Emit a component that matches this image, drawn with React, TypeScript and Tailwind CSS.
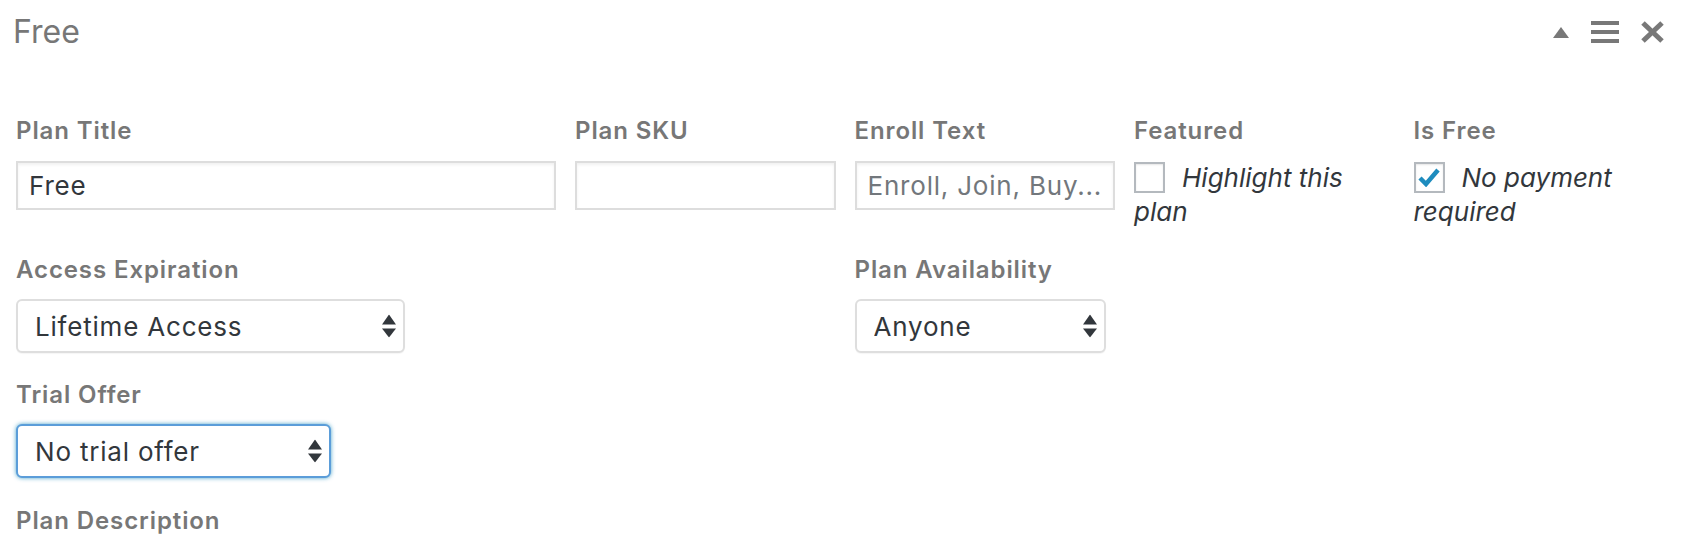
import clsx from 'clsx';

const labelCls = "block text-[24px] font-semibold leading-[32px] tracking-[0.9px] text-[#777]";
const inputCls =
  "mt-[14px] block h-[49px] w-full border-2 border-[#dddddd] bg-white px-[11px] text-[26px] tracking-[0.8px] text-[#32373c] shadow-[inset_0_2px_3px_rgba(0,0,0,0.06)] outline-none placeholder:text-[#72777c]";

function Arrows() {
  return (
    <svg width="14" height="23" viewBox="0 0 14 23" className="pointer-events-none absolute right-[7px] top-1/2 -translate-y-1/2" fill="#32373c">
      <polygon points="0,10 7,0 14,10" />
      <polygon points="0,14 14,14 7,23" />
    </svg>
  );
}

function SelectBox({ value, width, focused }: { value: string; width: string; focused?: boolean }) {
  return (
    <div
      className={clsx(
        'relative mt-[13px] h-[54px] rounded-[6px] border-2 bg-white',
        focused
          ? 'border-[#5b9dd9] shadow-[0_0_4px_rgba(30,140,190,0.8)]'
          : 'border-[#dedede] shadow-[0_1px_1px_rgba(0,0,0,0.04)]',
        width
      )}
    >
      <select
        defaultValue={value}
        className="h-full w-full appearance-none bg-transparent pl-[17px] pr-10 text-[26px] tracking-[0.8px] text-[#32373c] outline-none"
      >
        <option>{value}</option>
      </select>
      <Arrows />
    </div>
  );
}

function CheckField({ label, text, checked }: { label: string; text: string; checked?: boolean }) {
  return (
    <div>
      <span className={labelCls}>{label}</span>
      <div className="mt-[14px] text-[26px] italic leading-[34px] text-[#32373c]">
        <span className="float-left mr-[17px] mt-[1px] flex size-[31px] items-center justify-center border-2 border-[#b4b9be] bg-white shadow-[inset_0_1px_2px_rgba(0,0,0,0.1)]">
          {checked && (
            <svg width="22" height="19" viewBox="0 0 22 19">
              <polyline points="2,10 8,16 20,2" fill="none" stroke="#1e8cbe" strokeWidth="4.5" />
            </svg>
          )}
        </span>
        {text}
      </div>
    </div>
  );
}

export default function App() {
  return (
    <div className="min-h-[556px] bg-white font-['Inter',sans-serif]">
      <div className="flex h-[52px] items-center justify-between pl-[13px] pr-[42px] pt-[12px]">
        <h2 className="text-[32px] font-normal leading-[40px] text-[#777]">Free</h2>
        <div className="flex items-center gap-[22px]">
          <svg width="16" height="11" viewBox="0 0 16 11" fill="#787878">
            <polygon points="0,11 8,0 16,11" />
          </svg>
          <svg width="28" height="22" viewBox="0 0 28 22" fill="#787878">
            <rect x="0" y="0" width="28" height="4" />
            <rect x="0" y="9" width="28" height="4" />
            <rect x="0" y="18" width="28" height="4" />
          </svg>
          <svg width="23" height="22" viewBox="0 0 23 22" stroke="#787878" strokeWidth="5">
            <line x1="2" y1="2" x2="21" y2="20" />
            <line x1="21" y1="2" x2="2" y2="20" />
          </svg>
        </div>
      </div>

      <div className="mt-[63px] pl-[16px] pr-[32px]">
        <div className="grid grid-cols-6 gap-x-[19px]">
          <label className="col-span-2">
            <span className={labelCls}>Plan Title</span>
            <input className={inputCls} defaultValue="Free" />
          </label>
          <label>
            <span className={labelCls}>Plan SKU</span>
            <input className={inputCls} />
          </label>
          <label>
            <span className={labelCls}>Enroll Text</span>
            <input className={inputCls} placeholder="Enroll, Join, Buy..." />
          </label>
          <CheckField label="Featured" text="Highlight this plan" />
          <CheckField label="Is Free" text="No payment required" checked />
        </div>

        <div className="mt-[25px] grid grid-cols-6 gap-x-[19px]">
          <div className="col-span-3">
            <span className={labelCls}>Access Expiration</span>
            <SelectBox value="Lifetime Access" width="w-[389px]" />
          </div>
          <div className="col-span-2">
            <span className={labelCls}>Plan Availability</span>
            <SelectBox value="Anyone" width="w-[251px]" />
          </div>
        </div>

        <div className="mt-[26px]">
          <span className={labelCls}>Trial Offer</span>
          <SelectBox value="No trial offer" width="w-[315px]" focused />
        </div>

        <div className="mt-[27px]">
          <span className={labelCls}>Plan Description</span>
        </div>
      </div>
    </div>
  );
}
